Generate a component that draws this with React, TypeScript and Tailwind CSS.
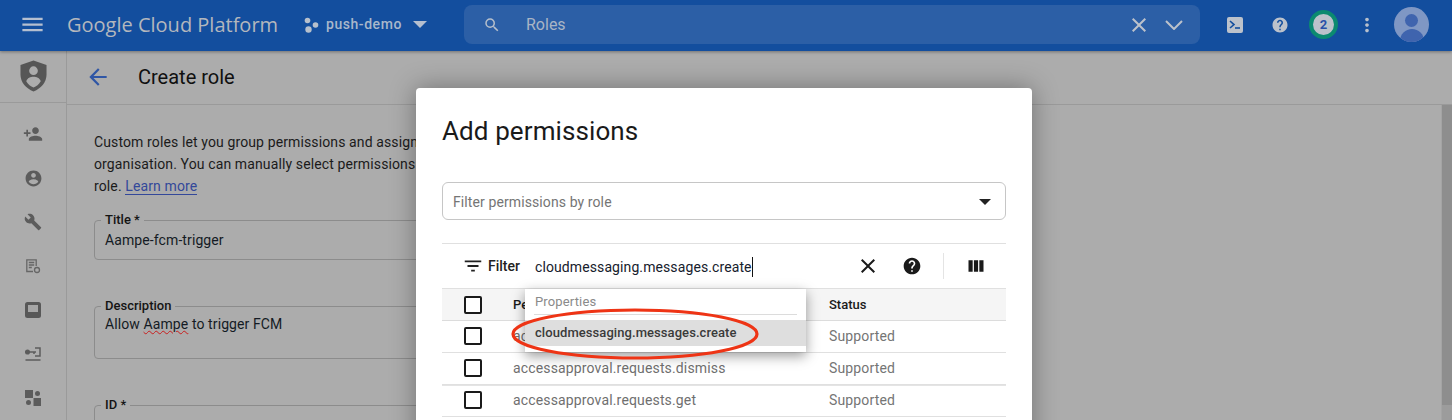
import React from "react";

const Ico = ({ d, size = 24, className = "" }: { d: string; size?: number; className?: string }) => (
  <svg width={size} height={size} viewBox="0 0 24 24" fill="currentColor" className={className}><path d={d} /></svg>
);

const P = {
  menu: "M3 18h18v-2H3v2zm0-5h18v-2H3v2zm0-7v2h18V6H3z",
  search: "M15.5 14h-.79l-.28-.27A6.47 6.47 0 0 0 16 9.5 6.5 6.5 0 1 0 9.5 16c1.61 0 3.09-.59 4.23-1.57l.27.28v.79l5 4.99L20.49 19l-4.99-5zm-6 0C7.01 14 5 11.99 5 9.5S7.01 5 9.5 5 14 7.01 14 9.5 11.99 14 9.5 14z",
  close: "M19 6.41 17.59 5 12 10.59 6.41 5 5 6.41 10.59 12 5 17.59 6.41 19 12 13.41 17.59 19 19 17.59 13.41 12z",
  help: "M12 2C6.48 2 2 6.48 2 12s4.48 10 10 10 10-4.48 10-10S17.52 2 12 2zm1 17h-2v-2h2v2zm2.07-7.75-.9.92C13.45 12.9 13 13.5 13 15h-2v-.5c0-1.1.45-2.1 1.17-2.83l1.24-1.26c.37-.36.59-.86.59-1.41 0-1.1-.9-2-2-2s-2 .9-2 2H8c0-2.21 1.79-4 4-4s4 1.79 4 4c0 .88-.36 1.68-.93 2.25z",
  dots: "M12 8c1.1 0 2-.9 2-2s-.9-2-2-2-2 .9-2 2 .9 2 2 2zm0 2c-1.1 0-2 .9-2 2s.9 2 2 2 2-.9 2-2-.9-2-2-2zm0 6c-1.1 0-2 .9-2 2s.9 2 2 2 2-.9 2-2-.9-2-2-2z",
  arrow: "M20 11H7.83l5.59-5.59L12 4l-8 8 8 8 1.41-1.41L7.83 13H20v-2z",
  addPerson: "M15 12c2.21 0 4-1.79 4-4s-1.79-4-4-4-4 1.79-4 4 1.79 4 4 4zm-9-2V7H4v3H1v2h3v3h2v-3h3v-2H6zm9 4c-2.67 0-8 1.34-8 4v2h16v-2c0-2.66-5.33-4-8-4z",
  account: "M12 2C6.48 2 2 6.48 2 12s4.48 10 10 10 10-4.48 10-10S17.52 2 12 2zm0 3c1.66 0 3 1.34 3 3s-1.34 3-3 3-3-1.34-3-3 1.34-3 3-3zm0 14.2c-2.5 0-4.71-1.28-6-3.22.03-1.99 4-3.08 6-3.08 1.99 0 5.97 1.09 6 3.08-1.29 1.94-3.5 3.22-6 3.22z",
  wrench: "M22.7 19l-9.1-9.1c.9-2.3.4-5-1.5-6.9-2-2-5-2.4-7.4-1.3L9 6 6 9 1.6 4.7C.4 7.1.9 10.1 2.9 12.1c1.9 1.9 4.6 2.4 6.9 1.5l9.1 9.1c.4.4 1 .4 1.4 0l2.3-2.3c.5-.4.5-1.1.1-1.4z",
  cols: "M3 5h5v14H3V5zm6.5 0h5v14h-5V5zM16 5h5v14h-5V5z",
  filter: "M10 18h4v-2h-4v2zM3 6v2h18V6H3zm3 7h12v-2H6v2z",
};

const Checkbox = () => <span className="block w-[18px] h-[18px] rounded-[2px] border-2 border-[#1a1a1a] bg-white shrink-0" />;

const Row = ({ name, thick }: { name: string; thick?: boolean }) => (
  <div className={`flex items-center h-[32px] pb-[1px] border-b border-[#e0e0e0] ${thick ? "shadow-[0_1px_0_#e4e4e4]" : ""}`}>
    <div className="w-[71px] pl-[22px] flex items-center"><Checkbox /></div>
    <div className="w-[316px] text-[14px] text-[#6f6f6f] tracking-[0.15px]">{name}</div>
    <div className="text-[14px] text-[#757575] tracking-[0.15px]">Supported</div>
  </div>
);

const Outlined = ({ label, value, h, gapAfter, top }: { label: string; value?: React.ReactNode; h: number; gapAfter: number; top: string }) => (
  <div className="relative w-[400px] border border-[#8c8c8c] rounded-[4px] pl-[10px] pr-2" style={{ height: h, marginBottom: gapAfter }}>
    <span className="absolute left-[6px] -top-[8px] bg-[#acacac] px-[4px] text-[13px] leading-[14px] font-medium text-[#141414]">{label}</span>
    <div className={`text-[14px] text-[#141b24] tracking-[0.1px] ${top} leading-[18px]`}>{value}</div>
  </div>
);

const RailSlot = ({ children }: { children: React.ReactNode }) => (
  <div className="h-[44px] flex items-center justify-center">{children}</div>
);

export default function App() {
  return (
    <div className="relative w-[1452px] h-[420px] overflow-hidden bg-[#acacac] font-['Roboto',sans-serif]">
      {/* Top bar */}
      <header className="relative z-10 h-[51px] pb-[2px] bg-[#134e9e] flex items-center shadow-[0_1px_3px_rgba(0,0,0,0.35)] text-[#b5bac1]">
        <div className="w-[67px] pl-[19px] flex items-center"><Ico d={P.menu} size={27} className="text-[#b5bfd0]" /></div>
        <div className="w-[237px] text-[20px] text-[#b3b7bd] font-['Open_Sans',sans-serif]">Google Cloud Platform</div>
        <div className="flex items-center w-[160px]">
          <svg width="15" height="16" viewBox="0 0 15 16" fill="#b7c0cc"><circle cx="3.5" cy="3.5" r="2.8" /><circle cx="11.5" cy="8" r="2.8" /><circle cx="4.5" cy="12.5" r="3.2" /></svg>
          <span className="ml-[7px] text-[14px] font-medium text-[#a9b8cb] tracking-[0.55px]">push-demo</span>
          <svg width="14" height="7" viewBox="0 0 14 7" className="ml-[11px]" fill="#b5bfcf"><path d="M0 0h14L7 7z" /></svg>
        </div>
        <div className="w-[736px] h-[39px] rounded-[8px] bg-[#2c5fa6] flex items-center">
          <Ico d={P.search} size={18} className="ml-[19px] text-[#b6bfcc]" />
          <span className="ml-[25px] text-[16px] text-[#a9b5c5] flex-1">Roles</span>
          <Ico d={P.close} size={24} className="text-[#bcc2cb] mr-[14px]" />
          <svg width="18" height="10" viewBox="0 0 18 10" fill="none" stroke="#bcc2cb" strokeWidth="2" className="mr-[17px]"><path d="M1 1l8 8 8-8" /></svg>
        </div>
        <div className="flex items-center ml-[27px]">
          <svg width="16" height="16" viewBox="0 0 16 16" className="mr-[28px]"><rect width="16" height="16" rx="2" fill="#bcc2cb" /><path d="M3 4l4 3.6L3 11" fill="none" stroke="#134e9e" strokeWidth="1.6" /><path d="M8 11h5" stroke="#134e9e" strokeWidth="1.6" /></svg>
          <Ico d={P.help} size={18} className="text-[#bcc2cb] mr-[20px]" />
          <span className="w-[29px] h-[29px] rounded-full border-[4px] border-[#0b8a70] bg-[#bcc2cb] flex items-center justify-center text-[13px] font-bold text-[#2a50a8] mr-[18px]">2</span>
          <Ico d={P.dots} size={22} className="text-[#b8c0cc] mr-[16px]" />
          <span className="relative block w-[35px] h-[35px] rounded-full bg-[#7f97c4] overflow-hidden">
            <span className="absolute left-[11px] top-[7px] w-[13px] h-[13px] rounded-full bg-[#3f64ae]" />
            <span className="absolute left-[6px] top-[22px] w-[24px] h-[16px] rounded-t-[12px] bg-[#3f64ae]" />
          </span>
        </div>
      </header>

      {/* Body */}
      <div className="flex h-[369px]">
        <aside className="w-[67px] shrink-0 border-r border-[#9a9a9a] flex flex-col">
          <div className="h-[54px] pb-[1px] border-b border-[#9a9a9a] flex items-center justify-center">
            <svg width="27" height="32" viewBox="0 0 28 32"><path d="M14 0l13.5 4.500v10c0 8-5.500 14.500-13.500 17.500C6 29 .5 22.500.5 14.500v-10z" fill="#565656" /><circle cx="14" cy="10.500" r="4.500" fill="#acacac" /><path d="M6.500 21.500C7.500 18 11 16.800 14 16.800s6.500 1.200 7.500 4.700C19.500 25 17 27 14 28c-3-1-5.500-3-7.500-6.500z" fill="#acacac" /></svg>
          </div>
          <div className="flex flex-col pt-[9px] text-[#5c5c5c]">
            <RailSlot><Ico d={P.addPerson} size={20} /></RailSlot>
            <RailSlot><Ico d={P.account} size={19} /></RailSlot>
            <RailSlot><Ico d={P.wrench} size={18} /></RailSlot>
            <RailSlot>
              <svg width="15" height="15" viewBox="0 0 15 15" fill="none" stroke="#666" strokeWidth="1.300"><path d="M7 12.500H.800V.800h9.400V7" /><path d="M2.800 3.500h5.400M2.800 6h5.400M2.800 8.500h3" /><circle cx="11" cy="11" r="2.500" /></svg>
            </RailSlot>
            <RailSlot>
              <svg width="16" height="16" viewBox="0 0 16 16"><rect width="16" height="16" rx="2.500" fill="#585858" /><rect x="3" y="3" width="10" height="7" fill="#a6a6a6" /></svg>
            </RailSlot>
            <RailSlot>
              <svg width="16" height="14" viewBox="0 0 16 14" fill="none" stroke="#5c5c5c" strokeWidth="1.500"><circle cx="2.500" cy="5" r="1.800" fill="#5c5c5c" /><path d="M4 5h7M9 5v2M10 1h5v8h-5M.5 13h15" /></svg>
            </RailSlot>
            <RailSlot>
              <svg width="16" height="16" viewBox="0 0 16 16" fill="#5c5c5c"><rect width="8" height="8" /><circle cx="12.500" cy="3.500" r="2.500" /><circle cx="3.500" cy="12.500" r="2.500" /><rect x="8.500" y="8" width="7.500" height="8" /></svg>
            </RailSlot>
          </div>
        </aside>
        <main className="flex-1 flex flex-col min-w-0">
          <div className="h-[54px] shrink-0 pb-[1px] border-b border-[#9a9a9a] flex items-center pl-[18px]">
            <Ico d={P.arrow} size={26} className="text-[#2f56a5]" />
            <h1 className="ml-[27px] text-[20px] text-[#101010] font-normal">Create role</h1>
          </div>
          <div className="flex-1 flex min-h-0">
            <div className="flex-1 pl-[27px] pt-[26px]">
              <p className="w-[600px] text-[14px] leading-[22px] text-[#1b1b1b] tracking-[0.12px] mb-[23px]">
                Custom roles let you group permissions and assign them to principals in your<br />
                organisation. You can manually select permissions or import permissions from another<br />
                role. <span className="text-[#33489a] border-b border-[#33489a]">Learn more</span>
              </p>
              <Outlined label="Title *" value="Aampe-fcm-trigger" h={40} gapAfter={46} top="pt-[10px]" />
              <Outlined label="Description" h={53} gapAfter={46} top="pt-[8px]" value={<>Allow <span className="underline decoration-wavy decoration-[#c81e1e] decoration-1">Aampe</span> to trigger FCM</>} />
              <Outlined label="ID *" h={40} gapAfter={0} top="pt-[10px]" />
            </div>
            <div className="w-[11px] bg-[#9c9c9c] border-l border-[#a4a4a4]"><div className="h-[300px] bg-[#8e8e8e]" /></div>
          </div>
        </main>
      </div>

      {/* Dialog */}
      <div className="absolute left-[416px] top-[88px] w-[616px] h-[360px] rounded-[4px] bg-white px-[26px] z-20 shadow-[0_0_26px_rgba(0,0,0,0.35)]">
        <h2 className="pt-[26px] text-[26px] leading-[34px] text-[#1a1a1a] font-normal tracking-[0.1px]">Add permissions</h2>
        <div className="mt-[34px] h-[38px] pt-[2px] rounded-[6px] border border-[#c6c6c6] flex items-center justify-between pl-[10px] pr-[14px]">
          <span className="text-[14px] text-[#757575] tracking-[0.1px]">Filter permissions by role</span>
          <svg width="12" height="6" viewBox="0 0 12 6" fill="#222"><path d="M0 0h12L6 6z" /></svg>
        </div>
        <div className="mt-[23px] h-[46px] border-y border-[#e0e0e0] flex items-center">
          <Ico d={P.filter} size={22} className="ml-[20px] text-[#222]" />
          <span className="ml-[4px] text-[14px] font-medium text-[#222] w-[47px]">Filter</span>
          <span className="mt-[1px] text-[14px] text-[#16202c] border-r border-[#111] leading-[20px] w-[218px] tracking-[0.1px]">cloudmessaging.messages.create</span>
          <Ico d={P.close} size={24} className="ml-[103px] text-[#1a1a1a]" />
          <Ico d={P.help} size={20} className="ml-[22px] text-[#1a1a1a]" />
          <span className="ml-[21px] w-px h-[26px] bg-[#e4e4e4]" />
          <Ico d={P.cols} size={20} className="ml-[22px] text-[#1a1a1a]" />
        </div>
        <div className="h-[32px] bg-[#f5f5f5] border-b border-[#dcdcdc] flex items-center">
          <div className="w-[71px] pl-[22px] flex items-center"><Checkbox /></div>
          <div className="w-[316px] text-[13px] font-medium text-[#1a1a1a]">Permission</div>
          <div className="text-[13px] font-medium text-[#1a1a1a]">Status</div>
        </div>
        <Row name="accessapproval.requests.approve" />
        <Row name="accessapproval.requests.dismiss" thick />
        <Row name="accessapproval.requests.get" />
      </div>

      {/* Autocomplete */}
      <div className="absolute z-30 left-[525px] top-[289px] w-[281px] h-[63px] bg-white shadow-[0_4px_12px_rgba(0,0,0,0.4)] pt-[5px]">
        <div className="mx-[9px] h-[21px] border-b border-[#dcdcdc] text-[13px] leading-[15px] text-[#8a8a8a] pl-px tracking-[0.15px]">Properties</div>
        <div className="mt-[5px] h-[26px] bg-[#dedede] pl-[10px] text-[13px] leading-[26px] font-medium text-[#3a3a3a] tracking-[0.07px]">cloudmessaging.messages.create</div>
      </div>

      {/* Hand-drawn highlight */}
      <svg className="absolute z-40 left-[509px] top-[306px]" width="252" height="56" viewBox="0 0 252 56" fill="none">
        <ellipse cx="126" cy="28" rx="122" ry="24" stroke="#ee3415" strokeWidth="3.200" />
      </svg>
    </div>
  );
}
